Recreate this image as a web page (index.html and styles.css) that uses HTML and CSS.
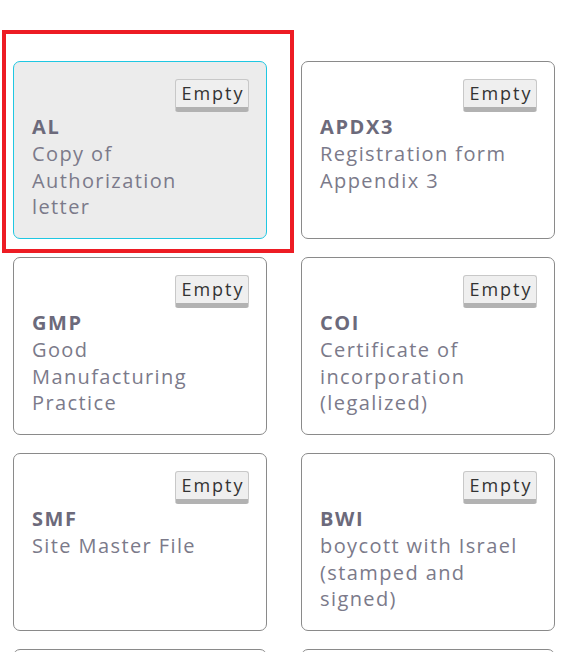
FILE: index.html
```html
<!DOCTYPE html>
<html lang="en">
<head>
<meta charset="utf-8">
<title>Documents</title>
<link rel="stylesheet" href="styles.css">
</head>
<body>
<div class="page">
  <div class="grid">
    <div class="card selected">
      <div class="card-top"><button class="status">Empty</button></div>
      <div class="code">AL</div>
      <div class="desc">Copy of Authorization letter</div>
    </div>
    <div class="card">
      <div class="card-top"><button class="status">Empty</button></div>
      <div class="code">APDX3</div>
      <div class="desc">Registration form Appendix 3</div>
    </div>
    <div class="card">
      <div class="card-top"><button class="status">Empty</button></div>
      <div class="code">GMP</div>
      <div class="desc">Good Manufacturing Practice</div>
    </div>
    <div class="card">
      <div class="card-top"><button class="status">Empty</button></div>
      <div class="code">COI</div>
      <div class="desc">Certificate of incorporation (legalized)</div>
    </div>
    <div class="card">
      <div class="card-top"><button class="status">Empty</button></div>
      <div class="code">SMF</div>
      <div class="desc">Site Master File</div>
    </div>
    <div class="card">
      <div class="card-top"><button class="status">Empty</button></div>
      <div class="code">BWI</div>
      <div class="desc">boycott with Israel (stamped and signed)</div>
    </div>
    <div class="card"></div>
    <div class="card"></div>
  </div>
  <div class="highlight"></div>
</div>
</body>
</html>
```

FILE: styles.css
```css
html, body {
  margin: 0;
  padding: 0;
  background: #ffffff;
  overflow: hidden;
}

body {
  font-family: "Open Sans", "DejaVu Sans", sans-serif;
}

.page {
  position: relative;
  height: 652px;
  overflow: hidden;
  padding: 61px 8px 0 13px;
  box-sizing: border-box;
}

.grid {
  display: grid;
  grid-template-columns: 254px 254px;
  column-gap: 34px;
  row-gap: 18px;
}

.card {
  box-sizing: border-box;
  height: 178px;
  border: 1px solid #8a8a8a;
  border-radius: 7px;
  background: #ffffff;
  padding: 17px 17px 0 18px;
}

.card.selected {
  background: #ececec;
  border-color: #1fc7e2;
}

.card-top {
  display: flex;
  justify-content: flex-end;
  height: 35px;
}

.status {
  box-sizing: border-box;
  height: 33px;
  width: 74px;
  padding: 0 0 0 2px;
  margin: 0;
  font-family: inherit;
  font-size: 18px;
  letter-spacing: 2px;
  color: #333333;
  background: #efefef;
  border: 1px solid #c8c8c8;
  border-bottom: 5px solid #b2b2b2;
  border-radius: 3px;
  line-height: 25px;
}

.code {
  font-size: 20px;
  font-weight: 700;
  letter-spacing: 1.6px;
  color: #6c6a7b;
  line-height: 26px;
}

.desc {
  font-size: 20px;
  letter-spacing: 1.4px;
  color: #7b7a8a;
  line-height: 26.5px;
  padding-top: 1px;
  max-width: 205px;
}

.highlight {
  position: absolute;
  left: 2px;
  top: 30px;
  width: 292px;
  height: 223px;
  box-sizing: border-box;
  border: 4px solid #ed1c24;
  pointer-events: none;
}
```
